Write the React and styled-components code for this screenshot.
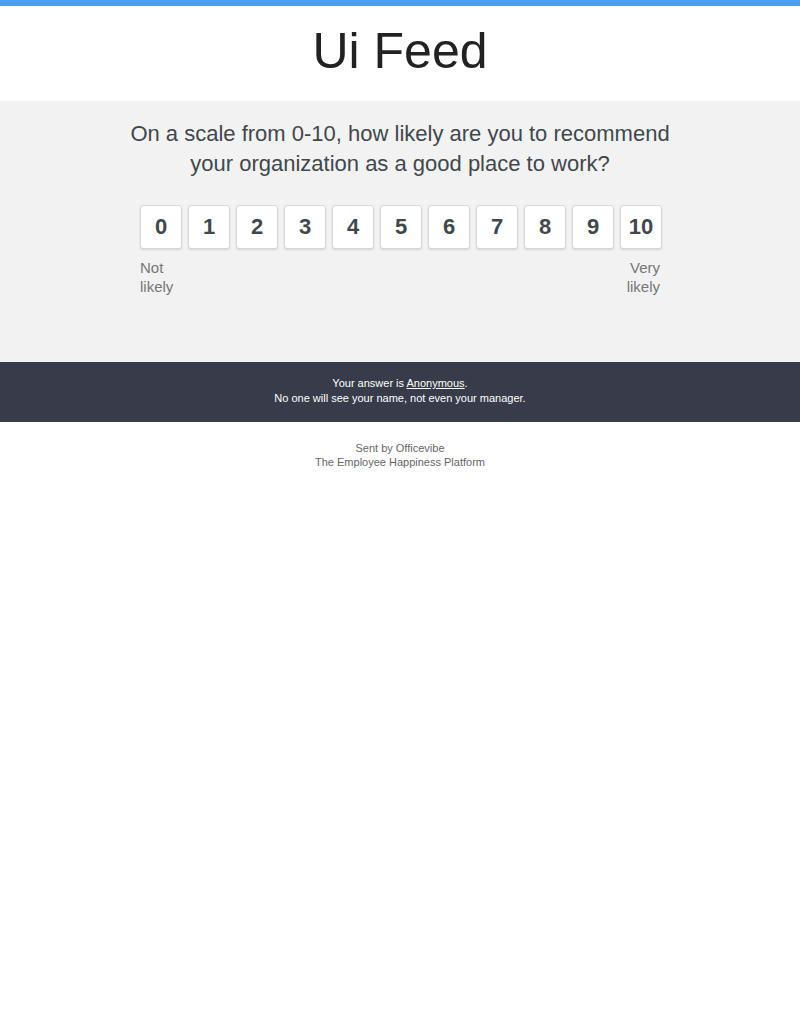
import React from 'react';
import styled, { createGlobalStyle } from 'styled-components';

const GlobalStyle = createGlobalStyle`
  body {
    margin: 0;
    background: #fff;
    font-family: "Liberation Sans", Arial, sans-serif;
  }
`;

const TopBar = styled.div`
  height: 6px;
  background: #4a9ff5;
`;

const Header = styled.header`
  height: 95px;
  box-sizing: border-box;
  padding-bottom: 6px;
  display: flex;
  align-items: center;
  justify-content: center;
`;

const Title = styled.h1`
  margin: 0;
  font-size: 50px;
  font-weight: normal;
  color: #222;
  line-height: 1;
`;

const Survey = styled.section`
  background: #f2f2f2;
  height: 261px;
  box-sizing: border-box;
  padding-top: 18px;
  display: flex;
  flex-direction: column;
  align-items: center;
`;

const Question = styled.p`
  margin: 0;
  font-size: 22px;
  line-height: 30px;
  color: #3f484d;
  text-align: center;
`;

const Scale = styled.div`
  margin-top: 26px;
  width: 522px;
  padding-left: 2px;
`;

const Buttons = styled.div`
  display: flex;
  gap: 6px;
`;

const ScoreButton = styled.button`
  width: 42px;
  height: 44px;
  padding: 0;
  background: #fff;
  border: 1px solid #d6d6d6;
  border-radius: 3px;
  box-shadow: 0 1px 2px rgba(0, 0, 0, 0.12);
  font-family: "Liberation Sans", Arial, sans-serif;
  font-size: 22px;
  font-weight: bold;
  color: #3f484d;
  cursor: pointer;
`;

const Labels = styled.div`
  display: flex;
  justify-content: space-between;
  margin-top: 9px;
  padding-right: 2px;
`;

const Label = styled.span`
  font-size: 15px;
  line-height: 19px;
  color: #777;
  text-align: ${p => (p.right ? 'right' : 'left')};
`;

const Notice = styled.div`
  background: #373b4a;
  height: 60px;
  box-sizing: border-box;
  padding-bottom: 2px;
  display: flex;
  flex-direction: column;
  justify-content: center;
  align-items: center;
  color: #fff;
  font-size: 11px;
  line-height: 15px;
`;

const Underline = styled.span`
  text-decoration: underline;
`;

const Footer = styled.footer`
  padding-top: 19px;
  text-align: center;
  font-size: 11px;
  line-height: 14px;
  color: #666;
`;

export default function App() {
  const scores = [0, 1, 2, 3, 4, 5, 6, 7, 8, 9, 10];
  return (
    <>
      <GlobalStyle />
      <TopBar />
      <Header>
        <Title>Ui Feed</Title>
      </Header>
      <Survey>
        <Question>
          On a scale from 0-10, how likely are you to recommend
          <br />
          your organization as a good place to work?
        </Question>
        <Scale>
          <Buttons>
            {scores.map(s => (
              <ScoreButton key={s}>{s}</ScoreButton>
            ))}
          </Buttons>
          <Labels>
            <Label>Not<br />likely</Label>
            <Label right>Very<br />likely</Label>
          </Labels>
        </Scale>
      </Survey>
      <Notice>
        <div>Your answer is <Underline>Anonymous</Underline>.</div>
        <div>No one will see your name, not even your manager.</div>
      </Notice>
      <Footer>
        <div>Sent by Officevibe</div>
        <div>The Employee Happiness Platform</div>
      </Footer>
    </>
  );
}
